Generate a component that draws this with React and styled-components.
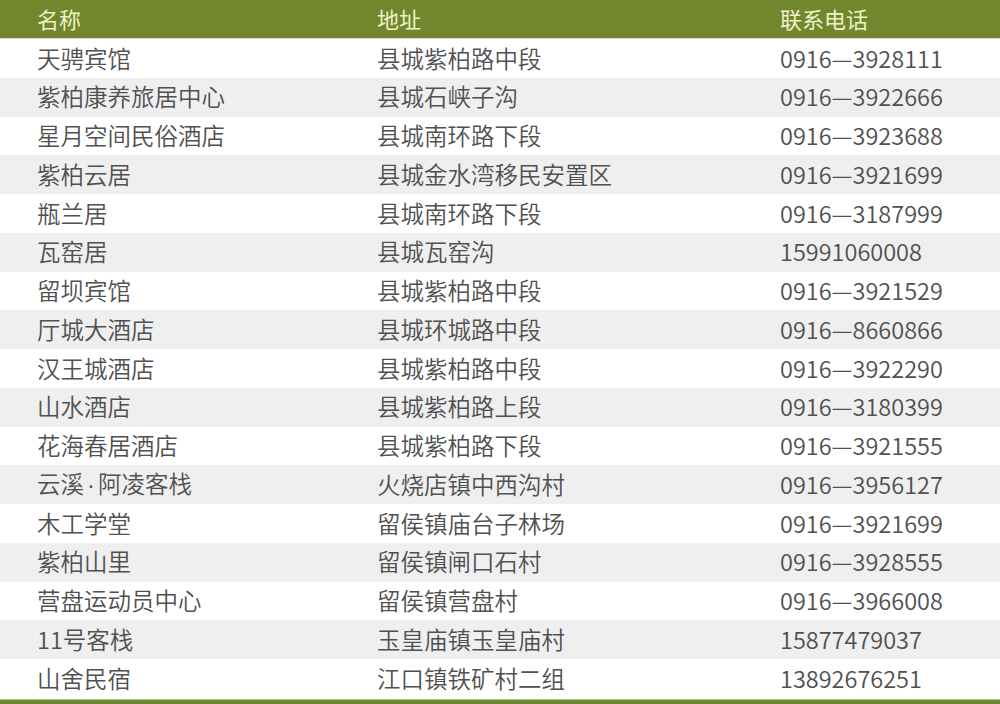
import styled, { createGlobalStyle } from 'styled-components';

const Global = createGlobalStyle`
  html, body { margin: 0; padding: 0; background: #fff; }
  body { width: 1000px; height: 704px; overflow: hidden; }
`;

const Table = styled.div`
  width: 1000px;
  font-family: "Noto Sans CJK SC", "Noto Sans", sans-serif;
  font-size: 23.5px;
  font-weight: 350;
`;

const Row = styled.div`
  display: grid;
  grid-template-columns: 340px 403px 1fr;
  padding-left: 37px;
  height: 38.75px;
  align-items: center;
  background: ${(p) => (p.$alt ? '#efefef' : '#ffffff')};
  color: #505050;
  line-height: 1;
`;

const Header = styled(Row)`
  height: 39px;
  padding-bottom: 3px;
  box-sizing: border-box;
  background: #72872d;
  border-bottom: 1px solid #d9e0bf;
  font-size: 22px;
  font-weight: 400;
  color: #eef1c9;
`;

const Cell = styled.span`
  white-space: nowrap;
`;

const Dot = styled.span`
  display: inline-block;
  width: 14px;
  text-align: center;
  font-family: "Liberation Sans", sans-serif;
`;

const Footer = styled.div`
  height: 6px;
  margin-top: 1px;
  background: #6f8a2e;
  border-top: 1px solid #b9c48f;
`;

const rows = [
  ['天骋宾馆', '县城紫柏路中段', '0916—3928111'],
  ['紫柏康养旅居中心', '县城石峡子沟', '0916—3922666'],
  ['星月空间民俗酒店', '县城南环路下段', '0916—3923688'],
  ['紫柏云居', '县城金水湾移民安置区', '0916—3921699'],
  ['瓶兰居', '县城南环路下段', '0916—3187999'],
  ['瓦窑居', '县城瓦窑沟', '15991060008'],
  ['留坝宾馆', '县城紫柏路中段', '0916—3921529'],
  ['厅城大酒店', '县城环城路中段', '0916—8660866'],
  ['汉王城酒店', '县城紫柏路中段', '0916—3922290'],
  ['山水酒店', '县城紫柏路上段', '0916—3180399'],
  ['花海春居酒店', '县城紫柏路下段', '0916—3921555'],
  ['云溪·阿凌客栈', '火烧店镇中西沟村', '0916—3956127'],
  ['木工学堂', '留侯镇庙台子林场', '0916—3921699'],
  ['紫柏山里', '留侯镇闸口石村', '0916—3928555'],
  ['营盘运动员中心', '留侯镇营盘村', '0916—3966008'],
  ['11号客栈', '玉皇庙镇玉皇庙村', '15877479037'],
  ['山舍民宿', '江口镇铁矿村二组', '13892676251'],
];

function Name({ text }) {
  const parts = text.split('·');
  if (parts.length < 2) return text;
  return (
    <>
      {parts[0]}
      <Dot>·</Dot>
      {parts[1]}
    </>
  );
}

export default function App() {
  return (
    <Table>
      <Global />
      <Header>
        <Cell>名称</Cell>
        <Cell>地址</Cell>
        <Cell>联系电话</Cell>
      </Header>
      {rows.map((r, i) => (
        <Row key={i} $alt={i % 2 === 1}>
          <Cell><Name text={r[0]} /></Cell>
          <Cell>{r[1]}</Cell>
          <Cell>{r[2]}</Cell>
        </Row>
      ))}
      <Footer />
    </Table>
  );
}
